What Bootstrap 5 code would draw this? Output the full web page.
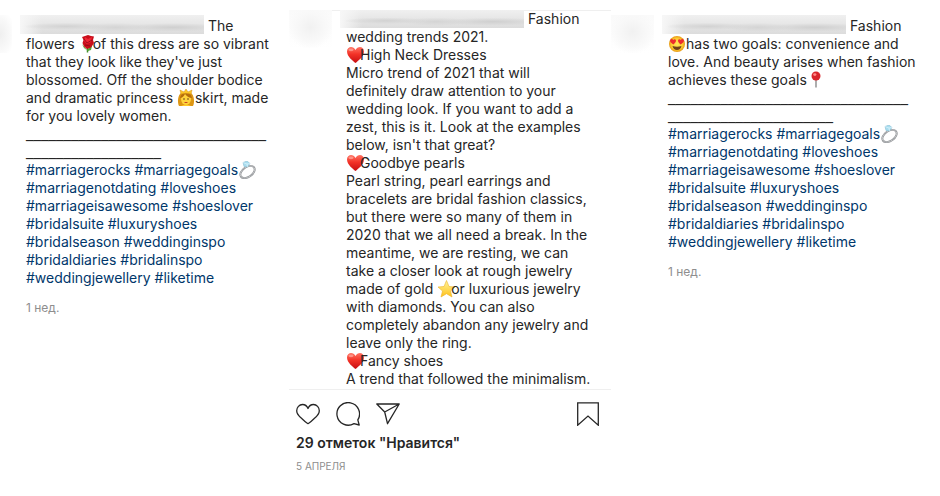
<!DOCTYPE html>
<html lang="ru">
<head>
<meta charset="utf-8">
<meta name="viewport" content="width=device-width, initial-scale=1">
<title>Wedding posts</title>
<link href="https://cdn.jsdelivr.net/npm/bootstrap@5.3.0/dist/css/bootstrap.min.css" rel="stylesheet">
<style>
body{font-family:Inter,Roboto,"Liberation Sans",sans-serif;font-size:14px;line-height:18px;color:#262626;background:#fff}
.feed{display:grid;grid-template-columns:289fr 322fr 329fr}
.side{padding-top:15px}
.middle{padding-top:10px}
.caption-row{gap:14px}
.framed .caption-row{margin-top:-1px;padding-bottom:1px}
.caption-text{white-space:nowrap}
.side .caption-text{padding-top:2px}
.face{width:43px;height:38px;background:radial-gradient(ellipse at 50% 45%,#f1f1f1 0,#f8f8f8 45%,transparent 75%),linear-gradient(#fafafa,#fff)}
.face-cut{width:12px;background:radial-gradient(ellipse at 0 50%,#efefef 0,#f9f9f9 60%,#fff 90%)}
.hidden-name{display:inline-block;vertical-align:top;width:184px;height:18px;margin-left:-6px;
background:radial-gradient(ellipse at 25% 60%,#d2d2d2 0,transparent 22%),radial-gradient(ellipse at 52% 65%,#d4d4d4 0,transparent 25%),radial-gradient(ellipse at 83% 65%,#cfcfcf 0,transparent 24%),linear-gradient(90deg,#f7f7f7 0,transparent 12%),linear-gradient(#f0f0f0,#dcdcdc)}
.side .hidden-name{margin-top:-2px;height:19px}
.emo{width:18px;height:18px;vertical-align:top;margin-right:-4px}
.emo-wide{margin-right:0}
.caption-text a{color:#00376b;text-decoration:none}
.rule-text{font-family:"DejaVu Sans",sans-serif;font-size:15px;margin-top:-2px;margin-bottom:2px}
.age{font-size:12px;line-height:16px;margin-top:13px;color:#8e8e8e}
.framed{border-top:1px solid #efefef;border-bottom:1px solid #efefef}
.act svg{width:24px;height:24px;display:block;fill:none;stroke:#262626;stroke-width:1.3;stroke-linejoin:round}
.acts{padding:12px 11px 8px 7px;gap:16px}
.likes{padding-left:7px;font-weight:600}
.date{padding-left:7px;margin-top:5px;font-size:10px;color:#8e8e8e}
</style>
</head>
<body>
<svg class="position-absolute" width="0" height="0" aria-hidden="true">
<defs>
<linearGradient id="gRed" x1="0" y1="0" x2="0" y2="1"><stop offset="0" stop-color="#ff7464"/><stop offset=".45" stop-color="#f33227"/><stop offset="1" stop-color="#c60e12"/></linearGradient>
<linearGradient id="gGold" x1="0" y1="0" x2="0" y2="1"><stop offset="0" stop-color="#fff49b"/><stop offset="1" stop-color="#ffc21a"/></linearGradient>
<radialGradient id="gFace"><stop offset="0" stop-color="#ffe65a"/><stop offset=".7" stop-color="#fdcb32"/><stop offset="1" stop-color="#e79a16"/></radialGradient>
</defs>
<symbol id="heart" viewBox="0 0 18 18"><path d="M9.500 17C7 15 1 10.500 1 5.500C1 0 7.500-.5 9.500 4C11.500-.5 18 0 18 5.500C18 10.500 12 15 9.500 17Z" fill="url(#gRed)"/><ellipse cx="5" cy="3.800" rx="2.600" ry="1.400" fill="#ffab9f" opacity=".7"/></symbol>
<symbol id="rose" viewBox="0 0 18 18"><path d="M8.500 9V17.500" stroke="#438c2b" stroke-width="1.500"/><path d="M3 9L8 15L13.500 9L12 15L9 16L5 13Z" fill="#54a536"/><path d="M3 2L6 1L9 0L12 1L15 1.500L14 5L15 8L12 12.500L8 14L5 11.500L3.500 8L4.500 5Z" fill="#c90e1a"/><path d="M6 2L9 4L13 2L12 7L8 9L5 6Z" fill="#ef2634"/><path d="M5 4L8 8L13 5M6 10L11 11" stroke="#8d0613" fill="none" stroke-width=".8"/></symbol>
<symbol id="princess" viewBox="0 0 18 18"><path d="M2 17C0 13 1 6 4 4H14C17 6 18 13 16 17Z" fill="#dd9614"/><ellipse cx="9" cy="10" rx="5" ry="6" fill="#ffd33d"/><path d="M3 9Q6 9 8 5Q11 9 15 9Q14 4 9 4Q4 4 3 9Z" fill="#b66d0c"/><path d="M4 5L3 1L7 3L9 0L11 3L15 1L14 5Q9 3.500 4 5Z" fill="#ffc927" stroke="#d28c10" stroke-width=".5"/><circle cx="7" cy="10" r=".8" fill="#5d3b16"/><circle cx="11" cy="10" r=".8" fill="#5d3b16"/><path d="M7 13Q9 15 11 13Z" fill="#bf2d22"/><path d="M4 17Q9 14 14 17Z" fill="#ffc927"/></symbol>
<symbol id="star" viewBox="0 0 18 18"><path d="M9.500 .5L12 6.500L18 7L13.500 11L15 17L9.500 13.700L4 17L5.500 11L1 7L7 6.500Z" fill="url(#gGold)" stroke="#edb32a" stroke-width=".6" stroke-linejoin="round"/></symbol>
<symbol id="loveface" viewBox="0 0 18 18"><circle cx="9" cy="9" r="8" fill="url(#gFace)"/><path d="M5.300 9.500C3 8 1.500 6.500 2.200 4.800C3 3.500 4.700 3.800 5.200 5C6.300 3.700 8 4.200 8 5.800C8 7.200 6.500 8.500 5.300 9.500ZM12.700 9.500C15 8 16.500 6.500 15.800 4.800C15 3.500 13.300 3.800 12.800 5C11.700 3.700 10 4.200 10 5.800C10 7.200 11.500 8.500 12.700 9.500Z" fill="#ed2b2f"/><path d="M4.500 11Q9 12.500 13.500 11Q12.500 15 9 15Q5.500 15 4.500 11Z" fill="#71401a"/></symbol>
<symbol id="pin" viewBox="0 0 18 18"><path d="M9 7V16.500" stroke="#8b8b8b" stroke-width="1.400"/><circle cx="9" cy="5" r="4.500" fill="#d9252b"/><ellipse cx="7.800" cy="3.600" rx="1.600" ry="1.300" fill="#ff8b87"/></symbol>
<symbol id="ring" viewBox="0 0 18 18"><ellipse cx="9.500" cy="11" rx="8" ry="5" transform="rotate(-35 9.500 11)" fill="none" stroke="#85888b" stroke-width="1.900"/><ellipse cx="9.500" cy="11" rx="8" ry="5" transform="rotate(-35 9.500 11)" fill="none" stroke="#d9dbdd" stroke-width=".7"/><path d="M5 1.500L9 0L12 2.500L9.500 6L6 5.500Z" fill="#a9ddef" stroke="#79b4cc" stroke-width=".5"/><path d="M5 1.500L9 3L12 2.500M9 3L9.500 6" stroke="#e9faff" stroke-width=".6" fill="none"/></symbol>
</svg>

<main class="feed">
<article class="side">
<div class="caption-row d-flex">
<div class="face face-cut flex-shrink-0"></div>
<div class="caption-text">
<span class="hidden-name"></span> The<br>flowers <svg class="emo"><use href="#rose"/></svg>of this dress are so vibrant<br>that they look like they've just<br>blossomed. Off the shoulder bodice<br>and dramatic princess <svg class="emo emo-wide"><use href="#princess"/></svg>skirt, made<br>for you lovely women.
<div class="rule-text">________________________________<br>__________________</div>
<a href="#">#marriagerocks</a> <a href="#">#marriagegoals</a><svg class="emo"><use href="#ring"/></svg><br><a href="#">#marriagenotdating</a> <a href="#">#loveshoes</a><br><a href="#">#marriageisawesome</a> <a href="#">#shoeslover</a><br><a href="#">#bridalsuite</a> <a href="#">#luxuryshoes</a><br><a href="#">#bridalseason</a> <a href="#">#weddinginspo</a><br><a href="#">#bridaldiaries</a> <a href="#">#bridalinspo</a><br><a href="#">#weddingjewellery</a> <a href="#">#liketime</a>
<div class="age">1 нед.</div>
</div>
</div>
</article>

<article class="middle">
<div class="framed">
<div class="caption-row d-flex">
<div class="face flex-shrink-0"></div>
<div class="caption-text">
<span class="hidden-name"></span> Fashion<br>wedding trends 2021.<br><svg class="emo"><use href="#heart"/></svg>High Neck Dresses<br>Micro trend of 2021 that will<br>definitely draw attention to your<br>wedding look. If you want to add a<br>zest, this is it. Look at the examples<br>below, isn't that great?<br><svg class="emo"><use href="#heart"/></svg>Goodbye pearls<br>Pearl string, pearl earrings and<br>bracelets are bridal fashion classics,<br>but there were so many of them in<br>2020 that we all need a break. In the<br>meantime, we are resting, we can<br>take a closer look at rough jewelry<br>made of gold <svg class="emo"><use href="#star"/></svg>or luxurious jewelry<br>with diamonds. You can also<br>completely abandon any jewelry and<br>leave only the ring.<br><svg class="emo"><use href="#heart"/></svg>Fancy shoes<br>A trend that followed the minimalism.
</div>
</div>
</div>
<div class="acts d-flex">
<button class="act btn p-0 border-0" aria-label="Нравится"><svg viewBox="0 0 24 24"><path d="M12 21.700C10.500 21 8 18.500 5.500 16.300C3 14.200 .7 12 .7 8.800C.7 5.300 3.300 2.500 6.500 2.500C9 2.500 11 4 12 6.500C13 4 15 2.500 17.500 2.500C20.700 2.500 23.300 5.300 23.300 8.800C23.300 12 21 14.200 18.500 16.300C16 18.500 13.500 21 12 21.700Z"/></svg></button>
<button class="act btn p-0 border-0" aria-label="Комментировать"><svg viewBox="0 0 24 24"><path d="M21.800 17.900A11.300 11.300 0 1 0 18 21.600L23.200 23Z"/></svg></button>
<button class="act btn p-0 border-0" aria-label="Поделиться"><svg viewBox="0 0 24 24"><path d="M.8 2H23.200L11.500 21.700L8.700 10ZM8.700 10L23.200 2"/></svg></button>
<button class="act btn p-0 border-0 ms-auto" aria-label="Сохранить"><svg viewBox="0 0 24 24"><path d="M1.700 .8H22.300V23.200L12 14L1.700 23.200Z" stroke-linejoin="miter"/></svg></button>
</div>
<div class="likes">29 отметок "Нравится"</div>
<div class="date">5 АПРЕЛЯ</div>
</article>

<article class="side">
<div class="caption-row d-flex">
<div class="face flex-shrink-0"></div>
<div class="caption-text">
<span class="hidden-name"></span> Fashion<br><svg class="emo emo-wide"><use href="#loveface"/></svg>has two goals: convenience and<br>love. And beauty arises when fashion<br>achieves these goals<svg class="emo"><use href="#pin"/></svg>
<div class="rule-text">________________________________<br>______________________</div>
<a href="#">#marriagerocks</a> <a href="#">#marriagegoals</a><svg class="emo"><use href="#ring"/></svg><br><a href="#">#marriagenotdating</a> <a href="#">#loveshoes</a><br><a href="#">#marriageisawesome</a> <a href="#">#shoeslover</a><br><a href="#">#bridalsuite</a> <a href="#">#luxuryshoes</a><br><a href="#">#bridalseason</a> <a href="#">#weddinginspo</a><br><a href="#">#bridaldiaries</a> <a href="#">#bridalinspo</a><br><a href="#">#weddingjewellery</a> <a href="#">#liketime</a>
<div class="age">1 нед.</div>
</div>
</div>
</article>
</main>
<script src="https://cdn.jsdelivr.net/npm/bootstrap@5.3.0/dist/js/bootstrap.bundle.min.js"></script>
</body>
</html>
